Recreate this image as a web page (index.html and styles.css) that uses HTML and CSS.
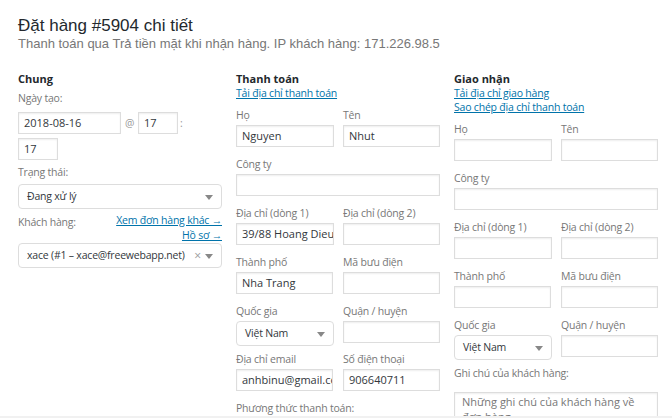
FILE: index.html
```html
<!DOCTYPE html>
<html lang="vi">
<head>
<meta charset="utf-8">
<link rel="stylesheet" href="styles.css">
</head>
<body>
<div class="panel">
  <h2 class="title">Đặt hàng #5904 chi tiết</h2>
  <p class="meta">Thanh toán qua Trả tiền mặt khi nhận hàng. IP khách hàng: 171.226.98.5</p>
  <div class="columns">
    <div class="col">
      <h3 class="col-head">Chung</h3>
      <div class="label first">Ngày tạo:</div>
      <div class="date-row">
        <div class="input w-date">2018-08-16</div>
        <span class="sep at">@</span>
        <div class="input w-hour">17</div>
        <span class="sep colon">:</span>
        <div class="break"></div>
        <div class="input w-hour">17</div>
      </div>
      <div class="label status-label">Trạng thái:</div>
      <div class="select full">Đang xử lý<span class="caret"></span></div>
      <div class="cust-row">
        <div class="label">Khách hàng:</div>
        <div class="cust-links">
          <a href="#">Xem đơn hàng khác →</a>
          <a href="#">Hồ sơ →</a>
        </div>
      </div>
      <div class="select full s2">xace (#1 – xace@freewebapp.net)<span class="clear">×</span><span class="caret"></span></div>
    </div>

    <div class="col">
      <h3 class="col-head">Thanh toán</h3>
      <a class="load" href="#">Tải địa chỉ thanh toán</a>
      <div class="fields">
        <div class="field half"><div class="label">Họ</div><div class="input">Nguyen</div></div>
        <div class="field half"><div class="label">Tên</div><div class="input">Nhut</div></div>
        <div class="field"><div class="label">Công ty</div><div class="input"></div></div>
        <div class="field half"><div class="label">Địa chỉ (dòng 1)</div><div class="input">39/88 Hoang Dieu</div></div>
        <div class="field half"><div class="label">Địa chỉ (dòng 2)</div><div class="input"></div></div>
        <div class="field half"><div class="label">Thành phố</div><div class="input">Nha Trang</div></div>
        <div class="field half"><div class="label">Mã bưu điện</div><div class="input"></div></div>
        <div class="field half sel"><div class="label">Quốc gia</div><div class="select">Việt Nam<span class="caret"></span></div></div>
        <div class="field half sel"><div class="label">Quận / huyện</div><div class="input"></div></div>
        <div class="field half"><div class="label">Địa chỉ email</div><div class="input">anhbinu@gmail.com</div></div>
        <div class="field half"><div class="label">Số điện thoại</div><div class="input">906640711</div></div>
        <div class="field"><div class="label">Phương thức thanh toán:</div></div>
      </div>
    </div>

    <div class="col">
      <h3 class="col-head">Giao nhận</h3>
      <a class="load" href="#">Tải địa chỉ giao hàng</a>
      <a class="load" href="#">Sao chép địa chỉ thanh toán</a>
      <div class="fields">
        <div class="field half"><div class="label">Họ</div><div class="input"></div></div>
        <div class="field half"><div class="label">Tên</div><div class="input"></div></div>
        <div class="field"><div class="label">Công ty</div><div class="input"></div></div>
        <div class="field half"><div class="label">Địa chỉ (dòng 1)</div><div class="input"></div></div>
        <div class="field half"><div class="label">Địa chỉ (dòng 2)</div><div class="input"></div></div>
        <div class="field half"><div class="label">Thành phố</div><div class="input"></div></div>
        <div class="field half"><div class="label">Mã bưu điện</div><div class="input"></div></div>
        <div class="field half sel"><div class="label">Quốc gia</div><div class="select">Việt Nam<span class="caret"></span></div></div>
        <div class="field half sel"><div class="label">Quận / huyện</div><div class="input"></div></div>
        <div class="field"><div class="label">Ghi chú của khách hàng:</div><div class="textarea"><span class="ph">Những ghi chú của khách hàng về đơn hàng</span></div></div>
      </div>
    </div>
  </div>
</div>
</body>
</html>
```
FILE: styles.css
```css
* { box-sizing: border-box; }
html, body { margin: 0; padding: 0; }
body {
  background: #f1f1f1;
  font-family: "Open Sans", "Noto Sans", sans-serif;
  font-size: 10.5px;
  letter-spacing: -0.2px;
  color: #444;
}
.panel {
  background: #fff;
  height: 416px;
  overflow: hidden;
  padding: 0 14px 0 18px;
}
.title {
  margin: 0;
  padding-top: 16px;
  font-family: "Liberation Sans", Arial, sans-serif;
  font-weight: 400;
  font-size: 17px;
  letter-spacing: 0;
  line-height: 20px;
  color: #23282d;
}
.meta {
  margin: 0;
  font-family: "Liberation Sans", Arial, sans-serif;
  font-size: 13px;
  letter-spacing: 0;
  line-height: 16px;
  color: #777;
}
.columns {
  display: flex;
  gap: 14px;
  margin-top: 19px;
}
.col { width: 204px; flex: none; }
.col-head {
  margin: 0;
  font-size: 11px;
  letter-spacing: 0;
  font-weight: 700;
  line-height: 15px;
  color: #23282d;
}
a { color: #0073aa; text-decoration: underline; }
.load { display: block; line-height: 14px; }
.label {
  line-height: 18px;
  color: #777;
  white-space: nowrap;
}
.label.first { margin-top: 3px; }
.input {
  height: 22px;
  border: 1px solid #ddd;
  box-shadow: inset 0 1px 2px rgba(0,0,0,.07);
  background: #fff;
  color: #32373c;
  padding: 0 5px;
  font-size: 11px;
  letter-spacing: 0;
  line-height: 20px;
  white-space: nowrap;
  overflow: hidden;
}
.date-row {
  display: flex;
  flex-wrap: wrap;
  align-items: center;
  row-gap: 2px;
  margin-top: 5px;
}
.break { flex-basis: 100%; height: 0; }
.w-date { width: 103px; }
.w-hour { width: 40px; }
.sep { color: #999; }
.sep.at { width: 17px; text-align: center; }
.sep.colon { margin-left: 2px; }
.status-label { margin-top: 3px; }
.select {
  position: relative;
  height: 25px;
  border: 1px solid #ddd;
  border-radius: 4px;
  background: #fff;
  color: #32373c;
  padding: 0 8px;
  line-height: 23px;
  white-space: nowrap;
}
.select.full { margin-top: 3px; }
.caret {
  position: absolute;
  right: 8px;
  top: 10px;
  width: 0; height: 0;
  border-left: 4px solid transparent;
  border-right: 4px solid transparent;
  border-top: 5px solid #888;
}
.clear {
  position: absolute;
  right: 20px;
  top: 0;
  color: #999;
  font-size: 12px;
}
.cust-row {
  display: flex;
  justify-content: space-between;
  margin-top: 4px;
}
.cust-links {
  display: flex;
  flex-direction: column;
  align-items: flex-end;
  line-height: 15px;
}
.s2.full { margin-top: 0; }
.fields {
  display: flex;
  flex-wrap: wrap;
  justify-content: space-between;
  margin-top: -2px;
}
.field { width: 100%; margin-top: 8px; }
.field .label { margin-bottom: 1px; }
.field.half { width: 98px; }
.field.half + .field.half { width: 97px; }
.field.sel { margin-bottom: -4px; }
.field.sel .select { width: 98px; }
.textarea {
  margin-top: 10px;
  height: 60px;
  border: 1px solid #ddd;
  box-shadow: inset 0 1px 2px rgba(0,0,0,.07);
  padding: 1px 7px;
  font-size: 11px;
  letter-spacing: 0;
  line-height: 15px;
}
.ph { color: #777; }
```
